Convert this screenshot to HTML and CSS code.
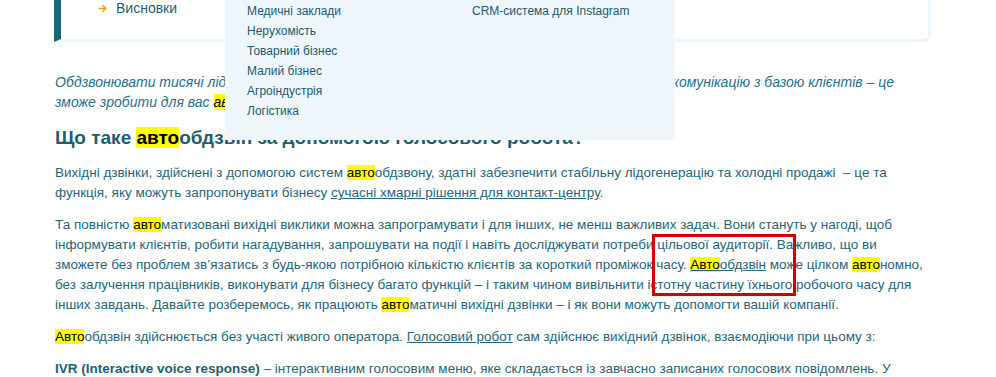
FILE: index.html
```html
<!DOCTYPE html>
<html lang="uk">
<head>
    <meta charset="utf-8">
    <title>Автообдзвін за допомогою голосового робота</title>
    <link rel="stylesheet" href="styles.css">
</head>
<body>

    <div class="page">
        <div class="toc">
            <ul>
                <li>
                    <svg class="toc-arrow" width="9" height="9" viewBox="0 0 9 9"><path d="M0.5 4.5H7.5M4.5 1.3L7.7 4.5L4.5 7.7" fill="none" stroke="#f0a01e" stroke-width="1.6"/></svg>
                    <a href="#conclusions">Висновки</a>
                </li>
            </ul>
        </div>

        <article class="post">
            <p class="lead">Обдзвонювати тисячі лідів за лічені хвилини, нагадувати про зустрічі та автоматизувати комунікацію з базою клієнтів – це зможе зробити для вас <mark>авто</mark>обдзвін.</p>

            <h2>Що таке <mark>авто</mark>обдзвін за допомогою голосового робота?</h2>

            <p>Вихідні дзвінки, здійснені з допомогою систем <mark>авто</mark>обдзвону, здатні забезпечити стабільну лідогенерацію та холодні продажі &nbsp;– це та функція, яку можуть запропонувати бізнесу <a href="#">сучасні хмарні рішення для контакт-центру</a>.</p>

            <p>Та повністю <mark>авто</mark>матизовані вихідні виклики можна запрограмувати і для інших, не менш важливих задач. Вони стануть у нагоді, щоб інформувати клієнтів, робити нагадування, запрошувати на події і навіть досліджувати потреби цільової аудиторії. Важливо, що ви зможете без проблем зв’язатись з будь-якою потрібною кількістю клієнтів за короткий проміжок часу. <a href="#"><mark>Авто</mark>обдзвін</a> може цілком <mark>авто</mark>номно, без залучення працівників, виконувати для бізнесу багато функцій – і таким чином вивільнити істотну частину їхнього робочого часу для інших завдань. Давайте розберемось, як працюють <mark>авто</mark>матичні вихідні дзвінки – і як вони можуть допомогти вашій компанії.</p>

            <p><mark>Авто</mark>обдзвін здійснюється без участі живого оператора. <a href="#">Голосовий робот</a> сам здійснює вихідний дзвінок, взаємодіючи при цьому з:</p>

            <p><strong>IVR (Interactive voice response)</strong> – інтерактивним голосовим меню, яке складається із завчасно записаних голосових повідомлень. У такому меню клієнт може самостійно обрати потрібний пункт за допомогою клавіш телефону.</p>
        </article>
    </div>

    <nav class="mega-menu">
        <ul class="menu-col">
            <li><a href="#">Медичні заклади</a></li>
            <li><a href="#">Нерухомість</a></li>
            <li><a href="#">Товарний бізнес</a></li>
            <li><a href="#">Малий бізнес</a></li>
            <li><a href="#">Агроіндустрія</a></li>
            <li><a href="#">Логістика</a></li>
        </ul>
        <ul class="menu-col">
            <li><a href="#">CRM-система для Instagram</a></li>
        </ul>
    </nav>

    <div class="annotation"></div>

</body>
</html>
```

FILE: styles.css
```css
body {
    margin: 0;
    font-family: "Liberation Sans", Arial, sans-serif;
    color: #23667c;
    background: #fff;
}

.page {
    width: 877px;
    margin-left: 54px;
}

/* table of contents */
.toc {
    border: 3px solid #eef6fd;
    border-top: none;
    border-left: 7px solid #1c6476;
    border-radius: 0 0 8px 0;
    padding: 0 0 23px 37px;
}

.toc ul {
    list-style: none;
    margin: 0;
    padding: 0;
}

.toc li {
    display: flex;
    align-items: center;
    gap: 9px;
    font-size: 14px;
    line-height: 16px;
}

.toc a {
    color: #1d5f73;
    text-decoration: none;
}

.toc-arrow {
    flex: none;
}

/* article */
.post {
    padding-left: 1px;
    font-size: 13.5px;
    line-height: 20px;
}

.post p {
    margin: 0 0 12px;
}

.post .lead {
    margin-top: 30px;
    font-size: 14px;
    font-style: italic;
    color: #24708c;
}

.post h2 {
    margin: 13px 0 12px;
    font-size: 19px;
    line-height: 26px;
    color: #1c5d71;
}

.post a {
    color: inherit;
    text-decoration: underline;
}

.post strong {
    color: #1d5f73;
}

mark {
    background: #ffff00;
    color: #000;
}

/* dropdown menu over the page */
.mega-menu {
    position: absolute;
    top: 0;
    left: 225px;
    width: 450px;
    height: 140px;
    background: #eef6fc;
    display: flex;
    padding: 1px 0 0 22px;
    box-sizing: border-box;
}

.menu-col {
    flex: none;
    list-style: none;
    margin: 0;
    padding: 0;
    width: 225px;
}

.menu-col li {
    font-size: 12px;
    line-height: 20px;
}

.menu-col a {
    color: #1c5a6d;
    text-decoration: none;
}

/* red highlight box drawn over the text */
.annotation {
    position: absolute;
    left: 652px;
    top: 234px;
    width: 138px;
    height: 56px;
    border: 3px solid #d40000;
}
```
